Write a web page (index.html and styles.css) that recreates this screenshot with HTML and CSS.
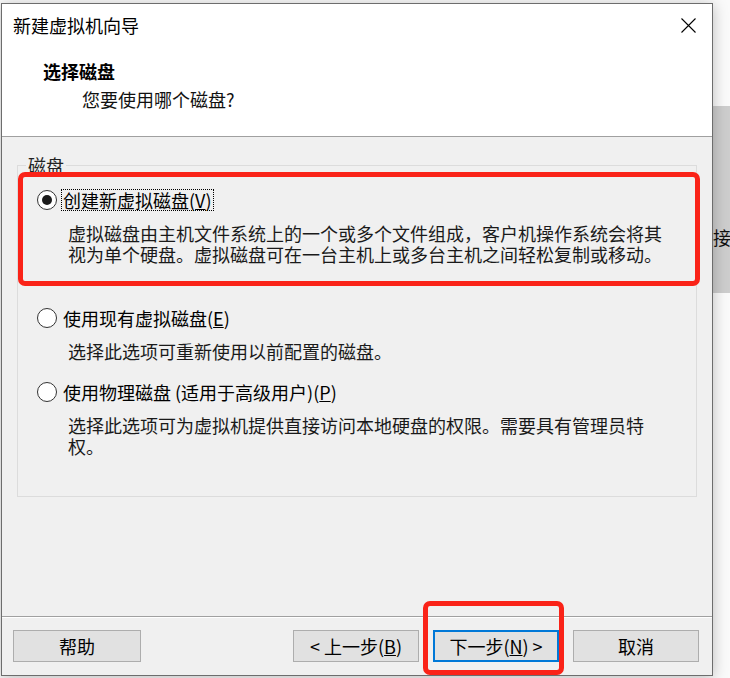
FILE: index.html
```html
<!DOCTYPE html>
<html lang="zh-CN">
<head>
<meta charset="utf-8">
<title>新建虚拟机向导</title>
<link rel="stylesheet" href="styles.css">
</head>
<body>
<div class="desktop">
  <div class="backwin"><span>接</span></div>
  <div class="dialog">
    <div class="titlebar">
      <span class="title">新建虚拟机向导</span>
      <span class="close"><svg width="15" height="15" viewBox="0 0 15 15"><path d="M0.5 0.5L14.5 14.5M14.5 0.5L0.5 14.5" stroke="#000" stroke-width="1.1" fill="none"/></svg></span>
    </div>
    <div class="header">
      <div class="h-title">选择磁盘</div>
      <div class="h-sub">您要使用哪个磁盘?</div>
    </div>
    <div class="content">
      <fieldset class="group">
        <legend>磁盘</legend>
        <div class="option opt1">
          <div class="row"><span class="radio checked"></span><span class="label focus">创建新虚拟磁盘(<u>V</u>)</span></div>
          <p class="desc">虚拟磁盘由主机文件系统上的一个或多个文件组成，客户机操作系统会将其视为单个硬盘。虚拟磁盘可在一台主机上或多台主机之间轻松复制或移动。</p>
        </div>
        <div class="option opt2">
          <div class="row"><span class="radio"></span><span class="label">使用现有虚拟磁盘(<u>E</u>)</span></div>
          <p class="desc">选择此选项可重新使用以前配置的磁盘。</p>
        </div>
        <div class="option opt3">
          <div class="row"><span class="radio"></span><span class="label">使用物理磁盘 (适用于高级用户)(<u>P</u>)</span></div>
          <p class="desc">选择此选项可为虚拟机提供直接访问本地硬盘的权限。需要具有管理员特权。</p>
        </div>
      </fieldset>
    </div>
    <div class="footer">
      <button class="btn help">帮助</button>
      <button class="btn">&lt; 上一步(<u>B</u>)</button>
      <button class="btn primary">下一步(<u>N</u>) &gt;</button>
      <button class="btn">取消</button>
    </div>
    <div class="annot annot-disk"></div>
    <div class="annot annot-next"></div>
  </div>
</div>
</body>
</html>
```
FILE: styles.css
```css
html, body {
  margin: 0;
  background: #fafafa;
}
body {
  font-family: "Noto Sans CJK SC", sans-serif;
  color: #000;
}
.desktop {
  position: relative;
  width: 730px;
  height: 678px;
  box-sizing: border-box;
  padding: 3px 0 0 1px;
  overflow: hidden;
}
.backwin {
  position: absolute;
  left: 690px;
  top: 106px;
  width: 60px;
  height: 187px;
  box-sizing: border-box;
  background: #cdcdcd;
  padding: 120px 0 0 23px;
  font-size: 18px;
  line-height: 22px;
  color: #111;
}
.dialog {
  position: relative;
  width: 712px;
  height: 673px;
  box-sizing: border-box;
  border: 1px solid #6d6d6d;
  background: #f0f0f0;
  display: flex;
  flex-direction: column;
  box-shadow: 0 2px 14px rgba(0, 0, 0, 0.25);
}
.titlebar {
  height: 42px;
  flex: none;
  background: #fff;
  display: flex;
  align-items: center;
  justify-content: space-between;
  padding: 0 16px 0 11px;
}
.title {
  font-size: 18px;
  line-height: 24px;
}
.close {
  display: flex;
  width: 15px;
  height: 15px;
}
.header {
  flex: none;
  background: #fff;
  padding: 13px 0 25px 41px;
  border-bottom: 1px solid #a0a0a0;
}
.h-title {
  font-size: 18px;
  line-height: 24px;
  font-weight: bold;
}
.h-sub {
  font-size: 18px;
  line-height: 24px;
  margin: 4px 0 0 39px;
  color: #111;
}
.content {
  flex: 1;
  min-height: 0;
}
.group {
  margin: 18px 15px 0 15px;
  padding: 14px 0 39px 0;
  border: 1px solid #dcdcdc;
  min-inline-size: 0;
}
.group legend {
  margin-left: 8px;
  padding: 0 2px;
  font-size: 18px;
  line-height: 20px;
  color: #222;
}
.row {
  display: flex;
  align-items: center;
  height: 22px;
  padding-left: 19px;
}
.radio {
  flex: none;
  width: 20px;
  height: 20px;
  box-sizing: border-box;
  border: 1px solid #333;
  border-radius: 50%;
  background: #fff;
  display: flex;
  align-items: center;
  justify-content: center;
}
.radio.checked::after {
  content: "";
  width: 10px;
  height: 10px;
  border-radius: 50%;
  background: #1b1b1b;
}
.label {
  margin-left: 4px;
  padding: 0 1px;
  font-size: 18px;
  line-height: 20px;
  border: 1px dotted transparent;
  white-space: nowrap;
}
.label.focus {
  border-color: #000;
}
.desc {
  margin: 12px 0 0 50px;
  width: 600px;
  font-size: 18px;
  line-height: 21px;
  color: #1a1a1a;
}
.opt2 {
  margin-top: 42px;
}
.opt3 {
  margin-top: 19px;
}
.footer {
  flex: none;
  display: flex;
  gap: 14px;
  padding: 13px 13px 13px 11px;
  border-top: 1px solid #a0a0a0;
  box-shadow: inset 0 1px #fff;
}
.btn {
  width: 126px;
  height: 32px;
  box-sizing: border-box;
  background: #e1e1e1;
  border: 1px solid #adadad;
  font-family: "Noto Sans CJK SC", sans-serif;
  font-size: 18px;
  line-height: 20px;
  color: #000;
  padding: 0;
  margin: 0;
}
.btn.help {
  width: 128px;
  margin-right: auto;
}
.btn.primary {
  border: 2px solid #0078d7;
}
.annot {
  position: absolute;
  box-sizing: border-box;
  border: 5px solid #fa2318;
  border-radius: 7px;
  pointer-events: none;
}
.annot-disk {
  left: 16px;
  top: 168px;
  width: 682px;
  height: 114px;
}
.annot-next {
  left: 421px;
  top: 597px;
  width: 141px;
  height: 74px;
}
```
